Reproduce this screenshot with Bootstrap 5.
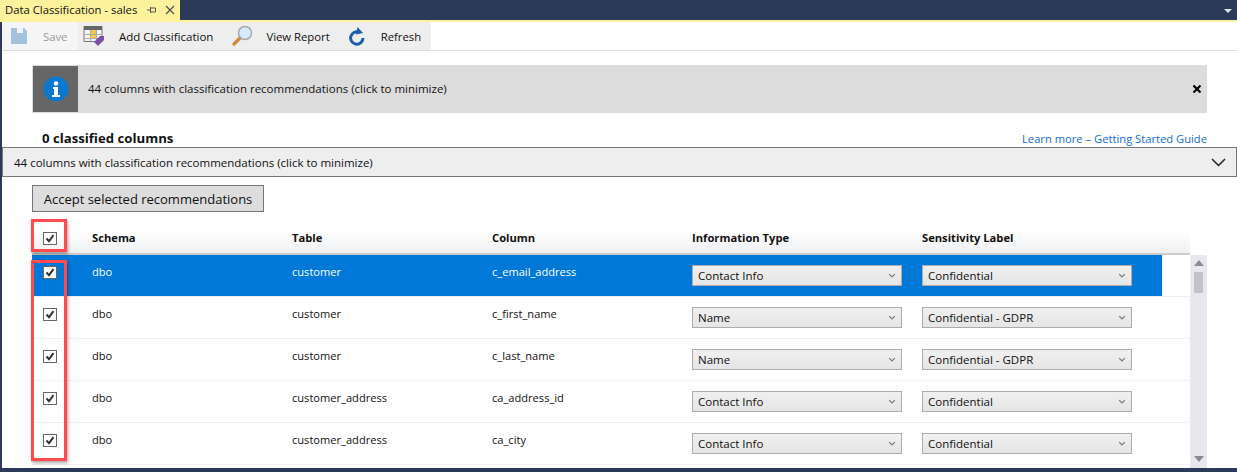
<!DOCTYPE html>
<html lang="en">
  <head>
    <meta charset="UTF-8" />
    <title>Data Classification - sales</title>
    <link href="https://cdn.jsdelivr.net/npm/bootstrap@5.3.0/dist/css/bootstrap.min.css" rel="stylesheet" />
    <style>
      html, body { height: 100%; }
      body {
        background: #fff;
        color: #111;
        font-family: "Open Sans", "Noto Sans", sans-serif;
        font-size: 11.5px;
        overflow: hidden;
        position: relative;
      }
      .shell { height: 472px; border-left: 2px solid #2b3a58; border-bottom: 4px solid #2b3a58; }
      .title-strip { height: 20px; background: #2b3a58; margin-left: -2px; }
      .doc-tab { width: 180px; background: #fff29d; font-size: 11.3px; padding: 0 5px; white-space: nowrap; }
      .tab-pin { margin-left: auto; }
      .tab-close { margin-left: 8px; }
      .tab-strip { height: 2px; background: #fff29d; margin-left: -2px; }
      .tool-strip { height: 29px; border-bottom: 1px solid #ddd; font-size: 11.3px; }
      .tool-group { height: 28px; background: #eee; width: 429px; }
      .tool-save { width: 76px; background: #f5f5f5; color: #9a9a9a; }
      .tool-lbl { white-space: nowrap; margin-left: 13px; padding-top: 2px; }
      .save-lbl { margin-left: 15px; }
      .add-lbl { margin-left: 14px; font-size: 11.5px; }
      .refresh-lbl { margin-left: 15px; }
      .icon-save { margin-left: 8px; }
      .icon-add { margin-left: 5px; }
      .icon-lens { margin-left: 18px; }
      .icon-refresh { margin-left: 18px; }
      .info-bar { margin: 14px 30px 0 30px; height: 48px; background: #dcdcdc; padding: 1px; }
      .info-icon { width: 45px; height: 46px; background: #666; }
      .info-text { margin-left: 10px; }
      .summary-line { margin: 17px 30px 0 40px; height: 17px; }
      .summary-title { font-size: 13.2px; font-weight: 700; }
      .guide-link { color: #0f6cd0; text-decoration: none; font-size: 11.2px; margin-top: 2px; }
      .expander-bar { height: 30px; background: #eee; border: 1px solid #777; padding: 1px 10px 0 11px; }
      .accept-btn { margin: 8px 0 0 30px; width: 232px; height: 27px; background: #ddd; border: 1px solid #777; border-radius: 0; font-size: 13px; padding: 2px 0 0; color: #111; }
      .grid-head { margin: 13px 0 0 30px; width: 1158px; height: 30px; background: linear-gradient(#fff 25%, #eeeff1); border-bottom: 2px solid #ccc; font-weight: 700; font-size: 11.2px; }
      .grid-wrap { margin-left: 30px; width: 1175px; }
      .grid-rows { width: 1158px; }
      .grid-row { height: 42px; border-bottom: 1px solid #f0f0f0; padding-top: 9px; }
      .grid-row.is-sel { color: #fff; background: linear-gradient(#0078d7, #0078d7) no-repeat; background-size: 1130px 41px; }
      .grid-row .col-text { font-size: 11.1px; }
      .col-check { width: 60px; flex: none; padding-left: 11px; }
      .grid-row .col-check { padding-top: 2px; }
      .col-text { width: 200px; flex: none; }
      .col-info { width: 230px; flex: none; }
      .col-sens { width: 210px; flex: none; }
      .grid-head .col-check { padding-top: 7px; }
      .grid-head .col-text, .grid-head .col-info, .grid-head .col-sens { padding-top: 5px; }
      .check-box { width: 14px; height: 13px; background: #fff; border: 1px solid #666; display: block; }
      .check-box svg { display: block; }
      .fake-select {
        width: 210px; height: 21px; margin-top: 1px; padding: 0 5px;
        border: 1px solid #acacac; color: #111;
        background: linear-gradient(#f0f0f0, #e5e5e5);
      }
      .scroll-track { width: 17px; height: 213px; background: #e8e8ec; }
      .scroll-up { margin-top: 5px; }
      .scroll-thumb { width: 9px; height: 21px; margin: 6px 0 0 4px; background: #c2c3c9; }
      .scroll-down { margin-top: auto; margin-bottom: 6px; }
      .red-box { position: absolute; border: 3px solid #ff4b4f; box-shadow: 1px 2px 3px rgba(0,0,0,.35); pointer-events: none; }
      .red-head { left: 31px; top: 219px; width: 36px; height: 33px; }
      .red-body { left: 31px; top: 260px; width: 36px; height: 201px; }
    </style>
  </head>
  <body>
    <div class="shell d-flex flex-column">
      <!-- tab title -->
      <div class="title-strip d-flex justify-content-between">
        <div class="doc-tab d-flex align-items-center">
          <span>Data Classification - sales</span>
          <svg class="tab-pin" width="10" height="10" viewBox="0 0 10 10"><path d="M0 5h3M3.500 2v6M3.500 3h5M3.500 7h5M8.500 3v4" stroke="#555" fill="none"/></svg>
          <svg class="tab-close" width="10" height="10" viewBox="0 0 10 10"><path d="M1 1l8 8M9 1l-8 8" stroke="#555" stroke-width="1.300" fill="none"/></svg>
        </div>
        <svg class="me-1 mt-2" width="10" height="6" viewBox="0 0 10 6"><path d="M1 1h8L5 5z" fill="#dfe3ea"/></svg>
      </div>
      <div class="tab-strip"></div>

      <!-- toolbar -->
      <div class="tool-strip">
        <div class="tool-group d-flex align-items-center">
          <div class="tool-save d-flex align-items-center h-100">
            <svg class="icon-save" width="18" height="18" viewBox="0 0 18 18"><path d="M1 1h13l3 3v13H1z" fill="#a3c2dc"/><path d="M7 1h6v5H7z" fill="#f0f4f8"/></svg>
            <span class="tool-lbl save-lbl">Save</span>
          </div>
          <svg class="icon-add" width="22" height="22" viewBox="0 0 22 22">
            <path d="M1 1.500h18v15H1z" fill="#f4f4f4" stroke="#777"/>
            <path d="M1 1h18v4H1z" fill="#666"/>
            <path d="M8 5h5v8H8z" fill="#f3c93e"/>
            <path d="M1.500 9.500h17M1.500 13.500h17M7.500 5v11M13.500 5v11" stroke="#aaa" fill="none"/>
            <path d="M11 17l6-6h4v4l-6 6z" fill="#7d4ea3"/>
          </svg>
          <span class="tool-lbl add-lbl">Add Classification</span>
          <svg class="icon-lens" width="22" height="22" viewBox="0 0 22 22">
            <path d="M9 13l-6 6" stroke="#d0883c" stroke-width="3.200" stroke-linecap="round"/>
            <circle cx="14" cy="8" r="6.500" fill="#d6ecfa" stroke="#a5a9ad" stroke-width="1.500"/>
          </svg>
          <span class="tool-lbl">View Report</span>
          <svg class="icon-refresh" width="18" height="20" viewBox="0 0 18 20">
            <path d="M11 6.200A6.200 6.200 0 1 0 15 12" fill="none" stroke="#1a5fa8" stroke-width="3"/>
            <path d="M9.500 1l5.500 6-7 1.500z" fill="#1a5fa8"/>
          </svg>
          <span class="tool-lbl refresh-lbl">Refresh</span>
        </div>
      </div>

      <!-- info banner -->
      <div class="info-bar d-flex align-items-center">
        <div class="info-icon d-flex align-items-center justify-content-center">
          <svg width="26" height="26" viewBox="0 0 26 26">
            <circle cx="13" cy="13" r="12.500" fill="#0a78cf"/>
            <circle cx="13" cy="7.500" r="2.200" fill="#fff"/>
            <path d="M10 11h5v8h2v2H9v-2h2v-6h-1z" fill="#fff"/>
          </svg>
        </div>
        <span class="info-text flex-grow-1">44 columns with classification recommendations (click to minimize)</span>
        <svg class="me-1" width="10" height="10" viewBox="0 0 10 10"><path d="M1.500 1.500l7 7M8.500 1.500l-7 7" stroke="#000" stroke-width="2.200"/></svg>
      </div>

      <div class="summary-line d-flex justify-content-between align-items-center">
        <span class="summary-title">0 classified columns</span>
        <a class="guide-link" href="#">Learn more – Getting Started Guide</a>
      </div>

      <div class="expander-bar d-flex justify-content-between align-items-center">
        <span>44 columns with classification recommendations (click to minimize)</span>
        <svg width="15" height="9" viewBox="0 0 15 9"><path d="M1 1l6.500 6.500L14 1" fill="none" stroke="#222" stroke-width="1.500"/></svg>
      </div>

      <div><button class="btn accept-btn" type="button">Accept selected recommendations</button></div>

      <!-- grid -->
      <div class="grid-head d-flex">
        <div class="col-check"><span class="check-box" id="headCheck"></span></div>
        <div class="col-text">Schema</div>
        <div class="col-text">Table</div>
        <div class="col-text">Column</div>
        <div class="col-info">Information Type</div>
        <div class="col-sens">Sensitivity Label</div>
      </div>
      <div class="grid-wrap d-flex">
        <div class="grid-rows" id="rows"></div>
        <div class="scroll-track d-flex flex-column align-items-center">
          <svg class="scroll-up" width="10" height="6" viewBox="0 0 10 6"><path d="M5 0l5 6H0z" fill="#8a8b90"/></svg>
          <div class="scroll-thumb align-self-start"></div>
          <svg class="scroll-down" width="10" height="6" viewBox="0 0 10 6"><path d="M5 6l5-6H0z" fill="#8a8b90"/></svg>
        </div>
      </div>
    </div>

    <div class="red-box red-head"></div>
    <div class="red-box red-body"></div>

    <script>
      const tick = '<svg width="12" height="11" viewBox="0 0 12 11"><path d="M2.500 5.500l2.500 2.700 4.500-6" fill="none" stroke="#333" stroke-width="2"/></svg>';
      const chevron = '<svg width="8" height="6" viewBox="0 0 8 6"><path d="M1.200 1.200L4 4l2.800-2.800" fill="none" stroke="#777" stroke-width="1.200"/></svg>';
      const data = [
        ["dbo", "customer", "c_email_address", "Contact Info", "Confidential"],
        ["dbo", "customer", "c_first_name", "Name", "Confidential - GDPR"],
        ["dbo", "customer", "c_last_name", "Name", "Confidential - GDPR"],
        ["dbo", "customer_address", "ca_address_id", "Contact Info", "Confidential"],
        ["dbo", "customer_address", "ca_city", "Contact Info", "Confidential"],
      ];
      const select = (text) =>
        `<div class="fake-select d-flex justify-content-between align-items-center"><span>${text}</span>${chevron}</div>`;
      document.getElementById("rows").innerHTML = data
        .map((r, i) => `<div class="grid-row d-flex ${i === 0 ? "is-sel" : ""}">
            <div class="col-check"><span class="check-box">${tick}</span></div>
            <div class="col-text">${r[0]}</div>
            <div class="col-text">${r[1]}</div>
            <div class="col-text">${r[2]}</div>
            <div class="col-info">${select(r[3])}</div>
            <div class="col-sens">${select(r[4])}</div>
          </div>`)
        .join("");
      document.getElementById("headCheck").innerHTML = tick;
    </script>
    <script src="https://cdn.jsdelivr.net/npm/bootstrap@5.3.0/dist/js/bootstrap.bundle.min.js"></script>
  </body>
</html>
